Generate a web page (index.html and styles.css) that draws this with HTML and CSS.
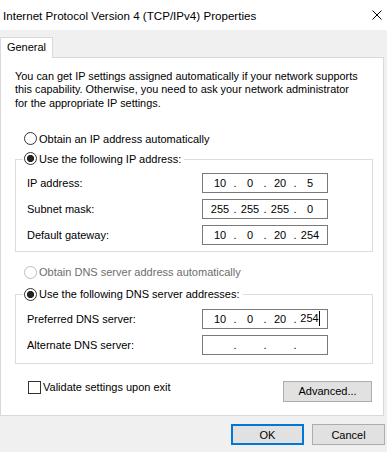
FILE: index.html
```html
<!DOCTYPE html>
<html lang="en">
<head>
<meta charset="utf-8">
<title>Internet Protocol Version 4 (TCP/IPv4) Properties</title>
<link rel="stylesheet" href="styles.css">
</head>
<body>
<div class="titlebar">
  <span class="title">Internet Protocol Version 4 (TCP/IPv4) Properties</span>
  <svg class="close" width="10" height="10" viewBox="0 0 10 10"><path d="M0.5 0.5L9.5 9.5M9.5 0.5L0.5 9.5" stroke="#000" stroke-width="1" fill="none"/></svg>
</div>
<div class="tabs"><div class="tab">General</div></div>
<div class="panel">
  <p class="intro">You can get IP settings assigned automatically if your network supports<br>this capability. Otherwise, you need to ask your network administrator<br>for the appropriate IP settings.</p>
  <label class="option"><span class="radio"></span>Obtain an IP address automatically</label>
  <fieldset class="group">
    <legend><span class="legend-inner"><span class="radio checked"></span>Use the following IP address:</span></legend>
    <div class="field"><span class="label">IP address:</span><div class="ip"><span class="seg">10</span><span class="dot">.</span><span class="seg">0</span><span class="dot">.</span><span class="seg">20</span><span class="dot">.</span><span class="seg">5</span></div></div>
    <div class="field"><span class="label">Subnet mask:</span><div class="ip"><span class="seg">255</span><span class="dot">.</span><span class="seg">255</span><span class="dot">.</span><span class="seg">255</span><span class="dot">.</span><span class="seg">0</span></div></div>
    <div class="field"><span class="label">Default gateway:</span><div class="ip"><span class="seg">10</span><span class="dot">.</span><span class="seg">0</span><span class="dot">.</span><span class="seg">20</span><span class="dot">.</span><span class="seg">254</span></div></div>
  </fieldset>
  <label class="option disabled"><span class="radio"></span>Obtain DNS server address automatically</label>
  <fieldset class="group dns">
    <legend><span class="legend-inner"><span class="radio checked"></span>Use the following DNS server addresses:</span></legend>
    <div class="field"><span class="label">Preferred DNS server:</span><div class="ip"><span class="seg">10</span><span class="dot">.</span><span class="seg">0</span><span class="dot">.</span><span class="seg">20</span><span class="dot">.</span><span class="seg"><span class="caret">254</span></span></div></div>
    <div class="field"><span class="label">Alternate DNS server:</span><div class="ip"><span class="seg"></span><span class="dot">.</span><span class="seg"></span><span class="dot">.</span><span class="seg"></span><span class="dot">.</span><span class="seg"></span></div></div>
  </fieldset>
  <div class="footer">
    <label class="check"><span class="box"></span>Validate settings upon exit</label>
    <button class="btn advanced">Advanced...</button>
  </div>
</div>
<div class="actions">
  <button class="btn default">OK</button>
  <button class="btn">Cancel</button>
</div>
</body>
</html>
```
FILE: styles.css
```css
* { box-sizing: border-box; }
html, body { margin: 0; padding: 0; }
body {
  width: 387px;
  height: 452px;
  overflow: hidden;
  background: #f0f0f0;
  font-family: "Liberation Sans", Arial, sans-serif;
  font-size: 11px;
  color: #000;
}
.titlebar {
  height: 30px;
  background: #fff;
  display: flex;
  align-items: center;
  justify-content: space-between;
  padding: 0 5px 0 3px;
}
.title { font-size: 11.6px; }
.close { display: block; }
.tabs { padding-top: 7px; display: flex; }
.tab {
  position: relative;
  z-index: 1;
  width: 53px;
  height: 21px;
  background: #fff;
  border: 1px solid #d9d9d9;
  border-bottom: none;
  text-align: center;
  line-height: 19px;
}
.panel {
  margin-top: -1px;
  width: 384px;
  height: 359px;
  background: #fff;
  border: 1px solid #d9d9d9;
}
.intro {
  margin: 12px 0 0 14px;
  font-size: 10.9px;
  line-height: 13.3px;
}
.option {
  display: flex;
  align-items: center;
  height: 16px;
  margin: 21px 0 0 23px;
}
.option.disabled { margin-top: 12px; color: #6d6d6d; }
.radio {
  display: inline-block;
  width: 13px;
  height: 13px;
  border: 1px solid #333;
  border-radius: 50%;
  margin-right: 2px;
  background: #fff;
  flex: none;
}
.radio.checked { background: radial-gradient(circle, #222 0 3.3px, #fff 3.9px); }
.disabled .radio { border-color: #bcbcbc; }
.group {
  margin: 4px 10px 0 14px;
  padding: 6px 0 6px 0;
  border: 1px solid #dcdcdc;
  min-width: 0;
}
.group.dns { margin-top: 6px; padding-bottom: 8px; }
.group legend {
  margin-left: 7px;
  padding: 0 3px 0 1px;
}
.legend-inner {
  display: inline-flex;
  align-items: center;
  height: 16px;
}
.field {
  display: flex;
  align-items: center;
  height: 20px;
  padding-left: 11px;
  margin-right: 44px;
}
.field + .field { margin-top: 6px; }
.label { flex: 1; }
.ip {
  width: 126px;
  height: 20px;
  border: 1px solid #7a7a7a;
  display: flex;
  align-items: center;
  padding-left: 5px;
}
.seg { width: 24px; text-align: center; }
.dot { width: 6px; text-align: center; }
.caret {
  display: inline-block;
  height: 15px;
  line-height: 15px;
  border-right: 1px solid #000;
  vertical-align: middle;
}
.footer {
  margin-top: 17px;
  display: flex;
  justify-content: space-between;
  align-items: flex-start;
  padding: 0 11px 0 27px;
}
.check {
  display: flex;
  align-items: center;
  height: 13px;
}
.box {
  width: 13px;
  height: 13px;
  border: 1px solid #333;
  margin-right: 2px;
  background: #fff;
}
.btn {
  font-family: inherit;
  font-size: 11px;
  color: #000;
  background: #e1e1e1;
  border: 1px solid #adadad;
  height: 21px;
  width: 73px;
  padding: 0;
  margin: 0;
}
.btn.advanced { width: 89px; }
.btn.default { border: 2px solid #0078d7; }
.actions {
  display: flex;
  justify-content: flex-end;
  gap: 8px;
  padding: 8px 2px 0 0;
}
```
